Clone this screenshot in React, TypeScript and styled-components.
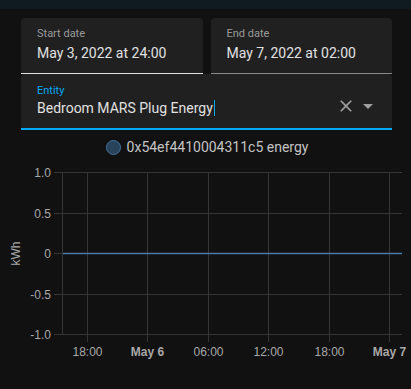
import React from "react";
import styled, { createGlobalStyle } from "styled-components";

const GlobalStyle = createGlobalStyle`
  html, body {
    margin: 0;
    padding: 0;
    background: #111111;
    font-family: Roboto, "Noto Sans", sans-serif;
  }
`;

const Page = styled.div`
  width: 411px;
  height: 389px;
  overflow: hidden;
  background: #111111;
`;

const TopStrip = styled.div`
  height: 9px;
  background: #0f1b21;
`;

const Content = styled.div`
  padding: 9px 19px 0 21px;
`;

const DateRow = styled.div`
  display: grid;
  grid-template-columns: 1fr 1fr;
  column-gap: 8px;
`;

const Field = styled.div<{ $line: string; $thick?: boolean }>`
  box-sizing: border-box;
  height: 56px;
  background: #202020;
  border-radius: 4px 4px 0 0;
  border-bottom: ${(p) => (p.$thick ? 2 : 1)}px solid ${(p) => p.$line};
  padding: ${(p) => (p.$thick ? "10px 12px 0 16px" : "9px 16px 0 16px")};
  display: flex;
  align-items: flex-start;
`;

const FieldText = styled.div`
  flex: 1;
  min-width: 0;
`;

const Label = styled.div<{ $accent?: boolean }>`
  font-size: 11px;
  line-height: 14px;
  color: ${(p) => (p.$accent ? "#03a9f4" : "#9a9a9a")};
`;

const Value = styled.div<{ $gap?: number }>`
  font-size: 14px;
  line-height: 20px;
  color: #e1e1e1;
  margin-top: ${(p) => p.$gap ?? 0}px;
  white-space: nowrap;
`;

const Caret = styled.span`
  display: inline-block;
  width: 1px;
  height: 16px;
  background: #03a9f4;
  vertical-align: -3px;
  margin-left: 1px;
`;

const Icons = styled.div`
  display: flex;
  align-items: center;
  margin-top: 10px;
  gap: 0;
`;

const IconBox = styled.span<{ $size: number }>`
  display: inline-flex;
  width: ${(p) => p.$size}px;
  height: ${(p) => p.$size}px;
  color: #9e9e9e;
`;

const Legend = styled.div`
  margin-top: 7px;
  height: 20px;
  display: flex;
  align-items: center;
  justify-content: center;
  padding-left: 3px;
  gap: 6px;
`;

const LegendDot = styled.span`
  box-sizing: border-box;
  width: 15px;
  height: 15px;
  border-radius: 50%;
  background: #28425a;
  border: 1.5px solid #44739e;
`;

const LegendText = styled.span`
  font-size: 14px;
  color: #c4c4c4;
`;

const ChartSvg = styled.svg`
  display: block;
  width: 411px;
  height: 232px;
  font-family: "Liberation Sans", Arial, sans-serif;
`;

const plotLeft = 62;
const plotRight = 402;
const plotTop = 15;
const plotBottom = 177;
const yTicks = ["1.0", "0.5", "0", "-0.5", "-1.0"];
const xTicks = [
  { x: 87, label: "18:00", bold: false },
  { x: 147, label: "May 6", bold: true },
  { x: 208, label: "06:00", bold: false },
  { x: 268, label: "12:00", bold: false },
  { x: 329, label: "18:00", bold: false },
  { x: 389, label: "May 7", bold: true },
];

const Chart = () => {
  const step = (plotBottom - plotTop) / (yTicks.length - 1);
  const grid = "#353535";
  return (
    <ChartSvg viewBox="0 0 411 232">
      {yTicks.map((t, i) => {
        const y = Math.round(plotTop + i * step) + 0.5;
        return (
          <g key={t}>
            <line x1={54} x2={plotRight} y1={y} y2={y} stroke={grid} strokeWidth={1} />
            <text x={51} y={y} fill="#a8a8a8" fontSize={12} textAnchor="end" dominantBaseline="central">
              {t}
            </text>
          </g>
        );
      })}
      <line x1={plotLeft + 0.5} x2={plotLeft + 0.5} y1={plotTop} y2={plotBottom + 1} stroke={grid} />
      {xTicks.map((t) => (
        <g key={t.x}>
          <line x1={t.x + 0.5} x2={t.x + 0.5} y1={plotTop} y2={plotBottom + 8} stroke={grid} />
          <text
            x={t.x + 0.5}
            y={199}
            fill="#a8a8a8"
            fontSize={12}
            fontWeight={t.bold ? 700 : 400}
            textAnchor="middle"
          >
            {t.label}
          </text>
        </g>
      ))}
      <line x1={plotLeft + 1} x2={plotRight} y1={96.5} y2={96.5} stroke="#4b7aa8" strokeWidth={1.6} />
      <text
        x={0}
        y={0}
        fill="#a8a8a8"
        fontSize={12}
        textAnchor="middle"
        dominantBaseline="central"
        transform="translate(15.5 96.5) rotate(-90)"
      >
        kWh
      </text>
    </ChartSvg>
  );
};

export default function App() {
  return (
    <Page>
      <GlobalStyle />
      <TopStrip />
      <Content>
        <DateRow>
          <Field $line="#e0e0e0">
            <FieldText>
              <Label>Start date</Label>
              <Value $gap={2}>May 3, 2022 at 24:00</Value>
            </FieldText>
          </Field>
          <Field $line="#8a8a8a">
            <FieldText>
              <Label>End date</Label>
              <Value $gap={2}>May 7, 2022 at 02:00</Value>
            </FieldText>
          </Field>
        </DateRow>
        <Field $line="#03a9f4" $thick>
          <FieldText>
            <Label $accent>Entity</Label>
            <Value>
              Bedroom MARS Plug Energy
              <Caret />
            </Value>
          </FieldText>
          <Icons>
            <IconBox $size={20}>
              <svg width="20" height="20" viewBox="0 0 24 24" fill="currentColor">
                <path d="M19,6.41L17.59,5L12,10.59L6.41,5L5,6.41L10.59,12L5,17.59L6.41,19L12,13.41L17.59,19L19,17.59L13.41,12L19,6.41Z" />
              </svg>
            </IconBox>
            <IconBox $size={24}>
              <svg width="24" height="24" viewBox="0 0 24 24" fill="currentColor">
                <path d="M7 10l5 5 5-5z" />
              </svg>
            </IconBox>
          </Icons>
        </Field>
      </Content>
      <Legend>
        <LegendDot />
        <LegendText>0x54ef4410004311c5 energy</LegendText>
      </Legend>
      <Chart />
    </Page>
  );
}
